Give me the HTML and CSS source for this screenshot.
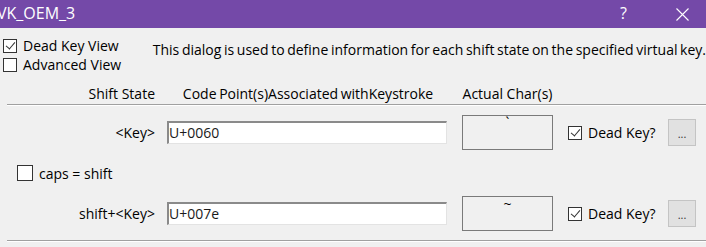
FILE: index.html
```html
<!DOCTYPE html>
<html lang="en">
<head>
    <meta charset="UTF-8">
    <title>VK_OEM_3</title>
    <link rel="stylesheet" href="styles.css">
</head>
<body>
    <div class="titlebar">
        <div class="title">VK_OEM_3</div>
        <div class="help">?</div>
        <div class="close">
            <svg width="13" height="13" viewBox="0 0 13 13"><path d="M0.5 0.5L12.5 12.5M12.5 0.5L0.5 12.5" stroke="#fff" stroke-width="1.1" fill="none"/></svg>
        </div>
    </div>

    <div class="top">
        <div class="views">
            <label class="check"><span class="box on"></span>Dead Key View</label>
            <label class="check"><span class="box"></span>Advanced View</label>
        </div>
        <div class="desc">This dialog is used to define information for each shift state on the specified virtual key.</div>
    </div>

    <div class="grid head">
        <div class="lbl">Shift State</div>
        <div class="mid">Code Point(s)Associated withKeystroke</div>
        <div class="mid">Actual Char(s)</div>
    </div>

    <div class="sep"></div>

    <div class="grid row row1">
        <div class="lbl">&lt;Key&gt;</div>
        <div class="field">U+0060</div>
        <div class="charbox">`</div>
        <label class="check dk"><span class="box on"></span>Dead Key?</label>
        <div class="btn">...</div>
    </div>

    <div class="caps">
        <label class="check"><span class="box"></span>caps = shift</label>
    </div>

    <div class="grid row row2">
        <div class="lbl">shift+&lt;Key&gt;</div>
        <div class="field">U+007e</div>
        <div class="charbox">~</div>
        <label class="check dk"><span class="box on"></span>Dead Key?</label>
        <div class="btn">...</div>
    </div>

    <div class="sep bottom"></div>
</body>
</html>
```

FILE: styles.css
```css
body {
    margin: 0;
    width: 706px;
    height: 247px;
    overflow: hidden;
    background: #f0f0f0;
    font-family: 'Open Sans', 'Noto Sans', sans-serif;
    font-size: 14px;
    color: #000;
}

.titlebar {
    height: 28px;
    background: #7449a8;
    color: #fff;
    display: flex;
    align-items: center;
}

.title {
    flex: 1;
    margin-left: -3px;
    font-size: 16px;
    padding-bottom: 2px;
}

.help {
    width: 56px;
    font-size: 16px;
    padding-bottom: 2px;
}

.close {
    width: 30px;
    display: flex;
    padding-top: 1px;
}

.top {
    display: flex;
    padding: 8px 0 0 3px;
    height: 46px;
}

.views {
    width: 152px;
    display: flex;
    flex-direction: column;
}

.check {
    display: flex;
    align-items: center;
    height: 19px;
    white-space: nowrap;
}

.box {
    width: 12px;
    height: 12px;
    border: 1px solid #333;
    background: #fff;
    margin-right: 6px;
    flex: none;
    position: relative;
}

.box.on::after {
    content: '';
    position: absolute;
    left: 3.5px;
    top: 0px;
    width: 4px;
    height: 8px;
    border: solid #333;
    border-width: 0 1.5px 1.5px 0;
    transform: rotate(40deg);
}

.desc {
    padding-top: 4px;
    white-space: nowrap;
    word-spacing: -1px;
}

.grid {
    display: grid;
    grid-template-columns: 155px 12px 280px 15px 91px 15px 100px 30px;
    align-items: center;
}

.lbl {
    grid-column: 1;
    text-align: right;
    white-space: nowrap;
}

.head {
    height: 22px;
}

.head .mid:nth-child(2) {
    grid-column: 3;
    text-align: center;
    word-spacing: -1px;
    padding-left: 2px;
    white-space: nowrap;
}

.head .mid:nth-child(3) {
    grid-column: 5;
    text-align: center;
    white-space: nowrap;
}

.sep {
    margin-left: 7px;
    height: 1px;
    background: #a0a0a0;
    border-bottom: 1px solid #fff;
}

.row {
    height: 35px;
}

.row1 {
    margin-top: 9px;
}

.field {
    grid-column: 3;
    height: 20px;
    background: #fff;
    border-top: 2px solid #8a8a8a;
    border-left: 2px solid #8a8a8a;
    border-right: 1px solid #e3e3e3;
    border-bottom: 1px solid #e3e3e3;
    line-height: 20px;
    color: #1a1a1a;
}

.charbox {
    grid-column: 5;
    height: 33px;
    border: 1px solid #7a7a7a;
    text-align: center;
    line-height: 14px;
    font-size: 14px;
}

.dk {
    grid-column: 7;
}

.btn {
    grid-column: 8;
    width: 26px;
    height: 25px;
    background: #e1e1e1;
    border: 1px solid #c4c4c4;
    text-align: center;
    font-size: 11px;
    line-height: 27px;
    color: #333;
}

.caps {
    height: 46px;
    padding-left: 17px;
    display: flex;
    align-items: center;
}

.caps .box {
    width: 14px;
    height: 14px;
}

.bottom {
    margin-top: 9px;
}
```
